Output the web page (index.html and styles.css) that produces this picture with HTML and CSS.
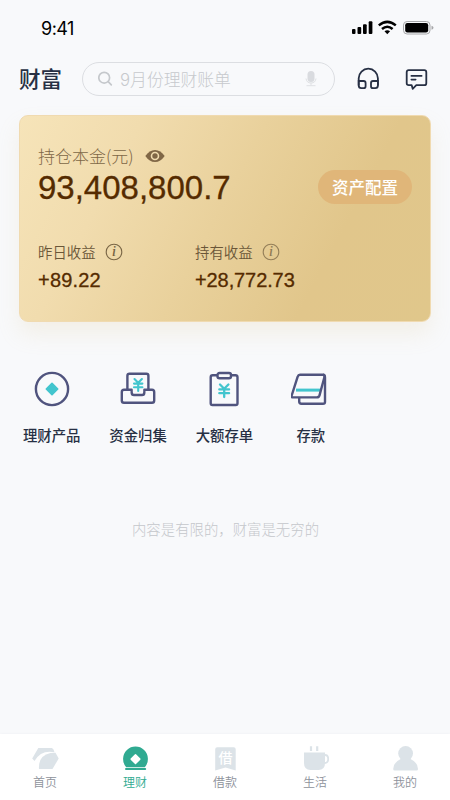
FILE: index.html
```html
<!DOCTYPE html>
<html lang="zh-CN">
<head>
<meta charset="utf-8">
<title>财富</title>
<link rel="stylesheet" href="styles.css">
</head>
<body>
<div class="app">
  <div class="status">
    <span class="time">9:41</span>
    <svg class="signals" width="84" height="18" viewBox="0 0 84 18">
      <g><rect x="1" y="10" width="3.5" height="5" rx="1"/><rect x="6.5" y="8" width="3.7" height="7" rx="1"/><rect x="12" y="5.2" width="3.7" height="9.8" rx="1"/><rect x="17.7" y="2.3" width="3.7" height="12.7" rx="1"/></g>
      <g fill="none" stroke="#000" stroke-width="2.5"><path d="M27.8 6.4Q36.3-.6 44.8 6.4"/><path d="M31 10Q36.3 5.4 41.6 10"/></g>
      <path d="M33.5 12.3Q36.3 10.2 39.1 12.3L36.3 15.2Z"/>
      <rect x="52.5" y="2.5" width="26.5" height="12.5" rx="3.6" fill="none" stroke="#a7a8aa"/>
      <rect x="54.2" y="4.1" width="23" height="9.3" rx="2.2"/>
      <path d="M80.5 6.8Q82.5 7.2 82.5 8.8T80.5 10.8Z" fill="#a7a8aa"/>
    </svg>
  </div>
  <header class="header">
    <h1>财富</h1>
    <div class="search">
      <svg width="16" height="16" viewBox="0 0 16 16" fill="none" stroke="#c5c8cc" stroke-width="1.7" stroke-linecap="round"><circle cx="6.2" cy="6.7" r="5.4"/><path d="M10.2 10.7L13.3 13.8"/></svg>
      <span>9月份理财账单</span>
      <svg class="mic" width="12" height="18" viewBox="0 0 12 18"><rect x="2.5" y="1" width="7" height="11" rx="3.5" fill="#d9dbdf"/><path d="M1 8.5Q1.6 13 6 13T11 8.5M6 13V15.5M1.5 15.7H10.5" fill="none" stroke="#dfe1e4"/></svg>
    </div>
    <svg class="phones" width="24" height="24" viewBox="0 0 24 24" fill="none" stroke="#273044" stroke-width="1.8"><path d="M2.7 18.6V11.3A9.6 9.6 0 0 1 21.9 11.3V18.6"/><path d="M2.7 14H7.6Q9.6 14 9.6 16V19.2Q9.6 21.2 7.6 21.2H5.3Q2.7 21.2 2.7 18.6ZM21.9 14H17Q15 14 15 16V19.2Q15 21.2 17 21.2H19.3Q21.9 21.2 21.9 18.6Z"/></svg>
    <svg width="24" height="24" viewBox="0 0 24 24" fill="none" stroke="#273044" stroke-width="1.8" stroke-linejoin="round" stroke-linecap="round"><path d="M4.7 3.2H20.3Q22.3 3.2 22.3 5.2V16.2Q22.3 18.2 20.3 18.2H12.3L8.7 21.8L7.7 18.2H4.7Q2.7 18.2 2.7 16.2V5.2Q2.7 3.2 4.7 3.2Z"/><path d="M7.3 8.9H17.7M7.3 12.6H11.7" stroke-width="1.6"/></svg>
  </header>

  <section class="card">
    <div class="principal">
      <div>
        <div class="label"><span>持仓本金(元)</span>
          <svg width="20" height="14" viewBox="0 0 20 14"><path d="M.3 7Q4.5 1 10 1T19.7 7Q15.5 13 10 13T.3 7Z" fill="#806746"/><circle cx="10" cy="7" r="3.5" fill="#806746" stroke="#f1dcaf" stroke-width="1.6"/></svg>
        </div>
        <div class="amount">93,408,800.7</div>
      </div>
      <button class="allocate">资产配置</button>
    </div>
    <div class="gains">
      <div>
        <div class="gain-label"><span>昨日收益</span><svg width="18" height="18" viewBox="0 0 18 18"><circle cx="9" cy="9" r="7.8" fill="none" stroke="#796545" stroke-width="1.1"/><text x="6.9" y="13.4">i</text></svg></div>
        <div class="gain">+89.22</div>
      </div>
      <div>
        <div class="gain-label"><span>持有收益</span><svg class="faint" width="18" height="18" viewBox="0 0 18 18"><circle cx="9" cy="9" r="7.8" fill="none" stroke="#796545" stroke-width="1.1"/><text x="6.9" y="13.4">i</text></svg></div>
        <div class="gain wide">+28,772.73</div>
      </div>
    </div>
  </section>

  <nav class="services">
    <a><svg width="38" height="38" viewBox="0 0 38 38" fill="none" stroke="#50547e" stroke-width="2.4"><circle cx="19" cy="19" r="16.1"/><path d="M19 13.3L24.7 19L19 24.7L13.3 19Z" fill="#42c5ce" stroke="#42c5ce" stroke-width="1.6" stroke-linejoin="round"/></svg><span>理财产品</span></a>
    <a><svg width="38" height="38" viewBox="0 0 38 38" fill="none" stroke="#50547e" stroke-width="2.4" stroke-linejoin="round"><path d="M8.4 19.7V5.7Q8.4 3.7 10.4 3.7H27.4Q29.4 3.7 29.4 5.7V19.7"/><path d="M12.7 19.7H5Q2.8 19.7 2.8 22V30.5Q2.8 32.8 5 32.8H33Q35.2 32.8 35.2 30.5V22Q35.2 19.7 33 19.7H25.3V22.7Q25.3 25 23 25H15Q12.7 25 12.7 22.7Z"/><path d="M13.9 17.5H24.1V22H13.9Z" fill="#f8f9fb" stroke="none"/><path d="M15.5 9L19.2 12.8L22.9 9M15 13.6H23.4M15 17.2H23.4M19.2 13V21" stroke="#42c5ce" stroke-width="2.1" stroke-linecap="round"/></svg><span>资金归集</span></a>
    <a><svg width="38" height="38" viewBox="0 0 38 38" fill="none" stroke="#50547e" stroke-width="2.4" stroke-linejoin="round"><path d="M12 5.2H7.7Q5.7 5.2 5.7 7.2V33.2Q5.7 35 7.5 35H30.7Q32.5 35 32.5 33.2V7.2Q32.5 5.2 30.5 5.2H26"/><rect x="12.5" y="3" width="13.5" height="5.3" rx="2"/><path d="M15 14.5L19.2 18.7L23.4 14.5M14.3 19.4H24.1M14.3 23.2H24.1M19.2 19V27" stroke="#42c5ce" stroke-width="2.3" stroke-linecap="round"/></svg><span>大额存单</span></a>
    <a><svg class="cards" width="38" height="38" viewBox="0 0 38 38" fill="none" stroke="#50547e" stroke-width="2.4" stroke-linejoin="round"><path d="M8.2 27V31.5Q8.2 33.7 10.4 33.7H32Q34 33.7 34 31.9V7.5Q34 4.8 32 4.8"/><path d="M5 20.1H30" stroke="#42c5ce" stroke-width="3"/><path d="M9 4.8H31.6Q34 4.8 33.4 7.2L28.5 25.4Q27.9 27.4 25.8 27.4H1.8Q.1 27.4 .7 25.5L6.6 6.8Q7.3 4.8 9 4.8Z"/></svg><span>存款</span></a>
  </nav>

  <p class="motto">内容是有限的，财富是无穷的</p>

  <footer class="tabs">
    <a><svg width="28" height="26" viewBox="0 0 28 26" fill="#dce3e8"><path d="M7.3 2H21Q22.8 3 23.5 6.2Q10 3.5 3.5 15L1.2 12.6Z"/><path d="M8 23.1Q7 9.8 19.5 7.1L24.5 6.8L27.7 12.4L21.5 23.1Z"/></svg><span>首页</span></a>
    <a class="active"><svg width="28" height="26" viewBox="0 0 28 26" fill="#30aa91"><path d="M5.2 21.2A12.4 12.4 0 1 1 23.8 21.2Z"/><rect x="4" y="22" width="21.2" height="2" rx="1"/><path d="M14.5 8.8L18.8 13.1L14.5 17.4L10.2 13.1Z" fill="#fff" stroke="#fff" stroke-width="1.5" stroke-linejoin="round"/></svg><span>理财</span></a>
    <a><svg width="28" height="26" viewBox="0 0 28 26"><path d="M6.2 1.2H22.7Q24.7 1.2 24.7 3.2V24.5L14.5 21.5L4.2 24.5V3.2Q4.2 1.2 6.2 1.2Z" fill="#dce3e8"/><text class="lend" x="7.5" y="16.8">借</text></svg><span>借款</span></a>
    <a><svg width="28" height="26" viewBox="0 0 28 26" fill="#dce3e8"><path d="M3 6.5H24V17Q24 24 17.5 24H9.5Q3 24 3 17Z"/><path d="M23 9H24Q27.2 9 27.2 12.9T24 17H23" fill="none" stroke="#dce3e8" stroke-width="1.8"/><path d="M10 .2V5M16.2 .2V5" stroke="#dce3e8" stroke-width="2.2"/></svg><span>生活</span></a>
    <a><svg width="28" height="26" viewBox="0 0 28 26" fill="#dce3e8"><circle cx="14.6" cy="7.5" r="7.4"/><path d="M9.7 13H19.5Q27 16.5 27 23Q27 24.6 25.6 24.6H3.6Q2.2 24.6 2.2 23Q2.2 16.5 9.7 13Z"/></svg><span>我的</span></a>
  </footer>
</div>
</body>
</html>
```
FILE: styles.css
```css
* { box-sizing: border-box; }
body {
  margin: 0;
  background: #f8f9fb;
  font-family: "Liberation Sans", "Noto Sans CJK SC", sans-serif;
  color: #273044;
}
.app { width: 450px; height: 800px; display: flex; flex-direction: column; overflow: hidden; }
.status { height: 56px; padding: 19px 15px 0 41px; display: flex; justify-content: space-between; }
.time { font: 18px/20px Inter, sans-serif; letter-spacing: -0.5px; color: #000; }
.signals { display: block; }
.header { height: 46px; padding: 0 22px 0 19px; display: flex; align-items: center; }
h1 { margin: 0; padding-top: 2px; width: 63px; font-size: 21.5px; line-height: 30px; font-weight: 500; white-space: nowrap; }
.search {
  width: 253px; height: 34px; padding: 0 17px 0 15px;
  display: flex; align-items: center; gap: 6px;
  border: 1px solid #dcdee2; border-radius: 17px;
  color: #c7c9cd; font: 300 16.8px/24px Inter, "Noto Sans CJK SC", sans-serif;
}
.search span { white-space: nowrap; padding-top: 2px; }
.mic { margin-left: auto; }
.phones { margin: 0 24px 0 21px; }
.card {
  margin: 13px 19px 0; height: 207px; padding: 28px 19px 0 18px;
  border: 1px solid #f0dab0; border-radius: 9px;
  background: linear-gradient(118deg, #f6e4b9 0%, #f1dcae 24%, #e9d19c 48%, #e1c68b 74%, #e0c78b 100%);
  box-shadow: 0 12px 22px rgba(218, 192, 130, .16);
}
.principal { display: flex; justify-content: space-between; }
.label { display: flex; align-items: center; gap: 11px; height: 25px; font: 300 17px/24px "Noto Sans CJK SC", sans-serif; color: #806746; }
.label span, .gain-label span { margin-top: -2px; }
.label svg { margin-top: -1px; }
.amount { font-size: 33px; line-height: 38px; color: #552b00; -webkit-text-stroke: .3px #552b00; }
.allocate {
  width: 94px; height: 34px; margin: 26px -1px 0 0; padding: 0;
  border: 0; border-radius: 17px; background: #e0b679; color: #fff;
  font: 500 16.5px/34px "Noto Sans CJK SC", sans-serif;
}
.gains { display: grid; grid-template-columns: 157px 1fr; margin-top: 34px; }
.gain-label { display: flex; align-items: center; gap: 9px; height: 22px; font-size: 14.4px; font-weight: 350; color: #6a5638; }
.gain-label text { font: italic 14px "Liberation Serif", serif; fill: #6a5638; stroke: #6a5638; stroke-width: .2px; }
.faint { opacity: .75; }
.gain { margin-top: 5px; font-size: 20px; line-height: 24px; letter-spacing: .2px; color: #552b00; -webkit-text-stroke: .3px #552b00; }
.wide { letter-spacing: -.1px; }
.services { margin: 48px 0 0 8.5px; display: grid; grid-template-columns: repeat(4, 86.4px); }
.services a { display: flex; flex-direction: column; align-items: center; gap: 17px; font-size: 14.4px; line-height: 22px; font-weight: 500; }
.services svg { display: block; margin-top: -.5px; }
.services .cards { margin-left: -1px; }
.motto { margin: 72px 0 0 1px; text-align: center; font-size: 14.4px; line-height: 22px; font-weight: 300; color: #c5c7cb; }
.tabs { height: 66px; margin-top: auto; padding-top: 12px; background: #fff; display: grid; grid-template-columns: repeat(5, 1fr); box-shadow: 0 -1px 2px rgba(30, 50, 70, .025); }
.tabs a { display: flex; flex-direction: column; align-items: center; gap: 2px; font-size: 12px; line-height: 18px; font-weight: 350; color: #8e929b; }
.tabs svg { display: block; }
.tabs .active { color: #30aa91; }
.lend { font: 500 14px "Noto Sans CJK SC", sans-serif; fill: #fff; }
```
